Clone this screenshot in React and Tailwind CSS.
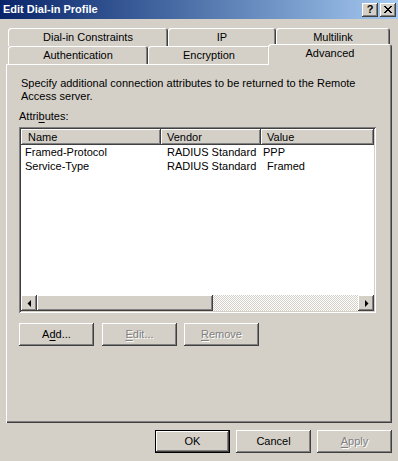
const RAISED = "shadow-[inset_-1px_-1px_#404040,inset_1px_1px_#ffffff,inset_-2px_-2px_#808080]";
const DIS = "text-[#808080] [text-shadow:1px_1px_0_#ffffff]";

function Btn({ children, disabled, def, className = "" }) {
  const sh = def
    ? "shadow-[inset_0_0_0_1px_#000000,inset_-2px_-2px_#404040,inset_2px_2px_#ffffff,inset_-3px_-3px_#808080]"
    : RAISED;
  return (
    <div className={`w-[75px] h-[23px] shrink-0 flex items-center justify-center bg-[#d4d0c8] ${sh} ${disabled ? DIS : "text-black"} ${className}`}>
      {children}
    </div>
  );
}

function Tab({ w, children, selected }) {
  if (selected) {
    return (
      <div className={`${w} -ml-[2px] -mt-[2px] h-[21px] relative z-10 bg-[#d4d0c8] rounded-t-[3px] flex justify-center items-center pb-[3px] shadow-[inset_1px_1px_#ffffff,inset_-1px_0_#404040,inset_-2px_0_#808080]`}>
        {children}
      </div>
    );
  }
  return (
    <div className={`${w} h-full shrink-0 bg-[#d4d0c8] rounded-t-[3px] flex justify-center items-center pt-[1px] shadow-[inset_1px_1px_#ffffff,inset_-1px_0_#404040,inset_-2px_0_#808080]`}>
      {children}
    </div>
  );
}

function Arrow({ dir }) {
  return (
    <svg width="4" height="7" viewBox="0 0 4 7">
      {dir === "left" ? (
        <polygon points="4,0 4,7 0.5,3.5" fill="#000" />
      ) : (
        <polygon points="0,0 0,7 3.5,3.5" fill="#000" />
      )}
    </svg>
  );
}

export default function App() {
  return (
    <div className="w-[398px] h-[461px] bg-[#d4d0c8] flex flex-col overflow-hidden font-['Liberation_Sans',Arial,sans-serif] text-[11px] leading-[13px] text-black">
      {/* Title bar */}
      <div className="h-[19px] shrink-0 flex items-center bg-linear-to-r from-[#0a246a] to-[#a6caf0] pl-[3px] pr-[2px]">
        <span className="flex-1 text-white font-bold text-[11px]">Edit Dial-in Profile</span>
        <div className="flex gap-[2px]">
          <div className={`w-[16px] h-[14px] bg-[#d4d0c8] ${RAISED} flex items-center justify-center font-bold text-[11px] leading-none pb-[1px]`}>?</div>
          <div className={`w-[16px] h-[14px] bg-[#d4d0c8] ${RAISED} flex items-center justify-center`}>
            <svg width="8" height="7" viewBox="0 0 8 7" shapeRendering="crispEdges">
              <path d="M0 0h2v1H0zM6 0h2v1H6zM1 1h2v1H1zM5 1h2v1H5zM2 2h4v1H2zM3 3h2v1H3zM2 4h4v1H2zM1 5h2v1H1zM5 5h2v1H5zM0 6h2v1H0zM6 6h2v1H6z" fill="#000" />
            </svg>
          </div>
        </div>
      </div>

      {/* Tabs */}
      <div className="mt-[9px] pl-[8px] flex flex-col shrink-0">
        <div className="flex h-[18px]">
          <Tab w="w-[160px]">Dial-in Constraints</Tab>
          <Tab w="w-[108px]">IP</Tab>
          <Tab w="w-[114px]">Multilink</Tab>
        </div>
        <div className="flex h-[18px]">
          <Tab w="w-[140px]">Authentication</Tab>
          <Tab w="w-[122px]">Encryption</Tab>
          <Tab w="w-[124px] shrink-0" selected>Advanced</Tab>
        </div>
      </div>

      {/* Panel */}
      <div className="ml-[6px] w-[386px] h-[359px] shrink-0 flex flex-col pt-[13px] px-[13px] shadow-[inset_1px_1px_#ffffff,inset_-1px_-1px_#404040,inset_-2px_-2px_#808080]">
        <div className="pl-[2px]">
          <div>Specify additional connection attributes to be returned to the Remote</div>
          <div>Access server.</div>
        </div>
        <div className="mt-[7px]">
          Attri<span className="underline underline-offset-[2px]">b</span>utes:
        </div>
        <div className="mt-[4px] w-[357px] h-[186px] p-[2px] bg-white flex flex-col shadow-[inset_1px_1px_#808080,inset_-1px_-1px_#ffffff,inset_2px_2px_#404040,inset_-2px_-2px_#d4d0c8]">
          <div className="flex h-[16px] shrink-0 bg-[#d4d0c8]">
            <div className={`w-[140px] pl-[7px] flex items-center ${RAISED}`}>Name</div>
            <div className={`w-[100px] pl-[6px] flex items-center ${RAISED}`}>Vendor</div>
            <div className={`flex-1 pl-[6px] flex items-center ${RAISED}`}>Value</div>
          </div>
          <div className="h-[150px] shrink-0 flex flex-col">
            <div className="flex h-[14px] items-center">
              <div className="w-[140px] pl-[4px]">Framed-Protocol</div>
              <div className="w-[100px] pl-[6px]">RADIUS Standard</div>
              <div className="flex-1 pl-[2px]">PPP</div>
            </div>
            <div className="flex h-[14px] items-center">
              <div className="w-[140px] pl-[4px]">Service-Type</div>
              <div className="w-[100px] pl-[6px]">RADIUS Standard</div>
              <div className="flex-1 pl-[6px]">Framed</div>
            </div>
          </div>
          <div className="flex h-[16px] shrink-0">
            <div className={`w-[16px] bg-[#d4d0c8] ${RAISED} flex items-center justify-center`}>
              <Arrow dir="left" />
            </div>
            <div className={`w-[176px] bg-[#d4d0c8] ${RAISED}`}></div>
            <div className="flex-1 bg-[image:repeating-conic-gradient(#ffffff_0%_25%,#d4d0c8_0%_50%)] [background-size:2px_2px]"></div>
            <div className={`w-[16px] bg-[#d4d0c8] ${RAISED} flex items-center justify-center pl-[1px]`}>
              <Arrow dir="right" />
            </div>
          </div>
        </div>
        <div className="mt-[10px] flex">
          <Btn>A<span className="underline underline-offset-[2px]">d</span>d...</Btn>
          <Btn disabled className="ml-[8px]"><span className="underline underline-offset-[2px]">E</span>dit...</Btn>
          <Btn disabled className="ml-[7px]"><span className="underline underline-offset-[2px]">R</span>emove</Btn>
        </div>
      </div>

      {/* Bottom buttons */}
      <div className="mt-[7px] flex justify-end pr-[6px] gap-[6px]">
        <Btn def>OK</Btn>
        <Btn>Cancel</Btn>
        <Btn disabled><span className="underline underline-offset-[2px]">A</span>pply</Btn>
      </div>
    </div>
  );
}
